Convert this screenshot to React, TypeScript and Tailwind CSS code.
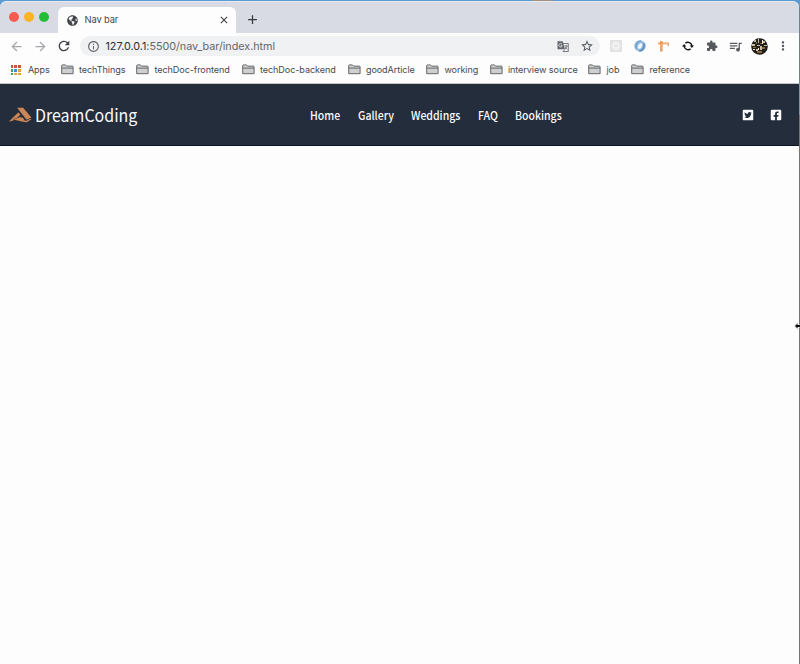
import React from "react";
import { FaAccusoft, FaFacebookSquare, FaTwitterSquare, FaGlobeAmericas } from "react-icons/fa";
import {
  MdAdd,
  MdArrowBack,
  MdArrowForward,
  MdClose,
  MdExtension,
  MdInfoOutline,
  MdMoreVert,
  MdQueueMusic,
  MdRefresh,
  MdStarBorder,
} from "react-icons/md";

const bookmarks = [
  { label: "techThings", cell: "w-[75.5px]", text: "w-[46px]" },
  { label: "techDoc-frontend", cell: "w-[105.5px]", text: "w-[75px]" },
  { label: "techDoc-backend", cell: "w-[106px]", text: "w-[75px]" },
  { label: "goodArticle", cell: "w-[78.5px]", text: "w-[48px]" },
  { label: "working", cell: "w-[63.5px]", text: "w-[33px]" },
  { label: "interview source", cell: "w-[98.5px]", text: "w-[69px]" },
  { label: "job", cell: "w-[43px]", text: "w-[13px]" },
  { label: "reference", cell: "w-[60px]", text: "w-[41px]" },
];

const menu = [
  { label: "Home", cell: "w-[47.7px]" },
  { label: "Gallery", cell: "w-[53px]" },
  { label: "Weddings", cell: "w-[67px]" },
  { label: "FAQ", cell: "w-[37.5px]" },
  { label: "Bookings", cell: "w-[48px]" },
];

const appColors = [
  "bg-[#d4513f]", "bg-[#d4513f]", "bg-[#c9573f]",
  "bg-[#3f9f62]", "bg-[#4387d9]", "bg-[#e0a03a]",
  "bg-[#3f9f62]", "bg-[#d9a441]", "bg-[#e0a03a]",
];

function Folder() {
  return (
    <svg className="h-[11px] w-[13px] shrink-0" viewBox="0 0 13 11">
      <path d="M.7 9.7V1.6Q.7.9 1.4.9h3l1.2 1.2h5.7q.8 0 .8.8v6.8Z" fill="#cfcfcf" stroke="#66686b" />
      <path d="M.8 4.1h11.3" stroke="#66686b" fill="none" />
    </svg>
  );
}

function Translate() {
  return (
    <svg className="h-[11px] w-[12px]" viewBox="0 0 12 11">
      <path d="M4.5 2.5h6.8v8H6" fill="#f0f1f3" stroke="#6a6d71" strokeWidth=".9" />
      <path d="M.5.3h5.2l2.2 8H.5Z" fill="#63666b" />
      <path d="M5 3.4A1.7 1.7 0 1 0 5.2 4.8H3.6" fill="none" stroke="#f0f1f3" strokeWidth=".8" />
      <path d="M7.3 5h3.5M9 4v1M10 5q-.5 2-2.2 3M8 6.2l2.3 2.2M6 10.5l1.8-2" fill="none" stroke="#606469" strokeWidth=".8" />
    </svg>
  );
}

function Atom() {
  return (
    <svg className="size-3" viewBox="0 0 12 12">
      <rect width="12" height="12" rx="1" fill="#e1e1e2" />
      <g fill="none" stroke="#f8f8f8" strokeWidth=".8">
        <ellipse cx="6" cy="6" rx="4.8" ry="1.9" />
        <ellipse cx="6" cy="6" rx="4.8" ry="1.9" transform="rotate(60 6 6)" />
        <ellipse cx="6" cy="6" rx="4.8" ry="1.9" transform="rotate(120 6 6)" />
      </g>
    </svg>
  );
}

function BlueSwirl() {
  return (
    <svg className="size-3" viewBox="0 0 12 12">
      <circle cx="6" cy="6" r="5.8" fill="#9abddd" />
      <path d="M7 .9C3 1.2 1.5 4.5 2.2 8.7" fill="none" stroke="#6b9fce" strokeWidth="1.3" />
      <path d="M5.2 11.1C9.5 10.4 10.8 7 9.8 3.3" fill="none" stroke="#5088bf" strokeWidth="1.4" />
      <ellipse cx="6" cy="6" rx="1.7" ry="3" fill="#f4f8fb" transform="rotate(32 6 6)" />
    </svg>
  );
}

function Crane() {
  return (
    <svg className="h-3 w-3" viewBox="0 0 12 12">
      <path d="M0 2.4h10.8v2H0Z" fill="#e8a875" />
      <path d="M2 1h2.6v10.5H2Z" fill="#e39b62" />
      <path d="m2.3 10 1.8-2-1.8-2 1.8-2M5.5 4l1.2-1.3L8 4l1.2-1.3" fill="none" stroke="#f7d2ae" strokeWidth=".5" />
      <path d="M10.3 4v2" stroke="#d78b58" />
    </svg>
  );
}

function Sync() {
  return (
    <svg className="size-3" viewBox="0 0 12 12" fill="#151515">
      <path d="M3.4 3.1A4 4 0 0 1 9.9 6M8.6 8.9A4 4 0 0 1 2.1 6" fill="none" stroke="#151515" strokeWidth="1.5" />
      <path d="M7.7 5.5H12L9.9 8ZM0 6.5h4.3L2.1 4Z" />
    </svg>
  );
}

function Avatar() {
  return (
    <svg className="size-[17px]" viewBox="0 0 17 17">
      <defs>
        <clipPath id="avatar"><circle cx="8.5" cy="8.5" r="8.3" /></clipPath>
      </defs>
      <g clipPath="url(#avatar)">
        <path fill="#211f1b" d="M0 0h17v17H0z" />
        <path fill="#cdbd9f" d="M3 2h2v2H3zm4-1h1v4H7zm5 2h2v2h-2zM1 6h3v2H1zm5 1h3v1H6zm7 0h3v1h-3zM9 8h2v4H9zm-4 3h2v2H5z" />
        <path fill="#8c6a44" d="M5 4h1v2H5zm4 1h2v1H9zm2 4h3v2h-3zM2 9h3v1H2zm4 4h5v2H6z" />
        <path fill="#f3ead8" d="M11 2h1v4h-1zM2 11h2v1H2zm5-1h1v2H7z" />
      </g>
    </svg>
  );
}

export default function App() {
  return (
    <div className="relative h-[664px] w-[800px] overflow-hidden bg-[#fefdfe] font-['Inter',sans-serif] text-[#46484c]">
      <header>
        <div className="flex h-[33px] flex-col bg-[#5b9ad3]">
          <div className="ml-[532px] h-px w-[21px] bg-[#a8917d]" />
          <div className="flex h-[32px] w-[799px] rounded-t-[6px] border-t border-[#e6eaf1] bg-[#d8dbe3] pl-[9px]">
            <div className="flex w-[49px] gap-[5px] pt-[10px]">
              <i className="size-[10px] rounded-full bg-[#fb5a50]" />
              <i className="size-[10px] rounded-full bg-[#fcb427]" />
              <i className="size-[10px] rounded-full bg-[#24bd38]" />
            </div>
            <div className="mt-[5px] flex h-[26px] w-[178px] items-center rounded-t-[6px] bg-[#fefdfe] pl-[9px] pr-[6px]">
              <FaGlobeAmericas className="size-[11px] text-[#414449]" />
              <span className="ml-[6.5px] w-[34px] whitespace-nowrap text-[9.4px] leading-none tracking-[-0.15px]">Nav bar</span>
              <MdClose className="ml-auto size-[12px] text-[#393c40]" />
            </div>
            <MdAdd className="ml-[9px] mt-[10px] size-[15px] text-[#36393d]" />
          </div>
        </div>
        <div className="flex h-[26px] items-center pl-[9px]">
          <MdArrowBack className="size-[15px] text-[#a5a7aa]" />
          <MdArrowForward className="ml-[9px] size-[15px] text-[#a5a7aa]" />
          <MdRefresh className="ml-[8px] size-[16px] text-[#404347]" />
          <div className="ml-[8px] flex h-[20px] w-[520px] items-center rounded-full bg-[#eff1f3] pl-[7px] pr-[6px]">
            <MdInfoOutline className="size-[13px] text-[#606367]" />
            <span className="ml-[5.5px] whitespace-nowrap pt-px text-[10.8px] leading-[12px] tracking-[-0.03px] text-[#66686c]">
              <span className="text-[#2e3034]">127.0.0.1</span>:5500/nav_bar/index.html
            </span>
            <span className="ml-auto"><Translate /></span>
            <MdStarBorder className="ml-[11px] size-[14px] text-[#505358]" />
          </div>
          <div className="ml-[10px] flex items-center gap-[12px]">
            <Atom /><BlueSwirl /><Crane /><Sync />
            <MdExtension className="-ml-[0.5px] size-[12px] text-[#56595d]" />
            <MdQueueMusic className="-ml-[1.5px] size-[15px] text-[#56595d]" />
          </div>
          <div className="ml-[8px]"><Avatar /></div>
          <MdMoreVert className="ml-[8px] size-[14px] text-[#505358]" />
        </div>
        <div className="flex h-[25px] items-start border-b border-[#c3c4c8] pl-[10.5px] pt-[5px] text-[9.05px] leading-[11px] tracking-[-0.06px]">
          <div className="mt-[1px] grid grid-cols-3 gap-[1px]">
            {appColors.map((color, i) => <i key={i} className={"size-[2.8px] " + color} />)}
          </div>
          <span className="ml-[7px] w-[33px] shrink-0">Apps</span>
          {bookmarks.map((bookmark) => (
            <div key={bookmark.label} className={"flex shrink-0 " + bookmark.cell}>
              <Folder />
              <span className={"ml-[5px] flex whitespace-nowrap " + bookmark.text}>{bookmark.label}</span>
            </div>
          ))}
        </div>
      </header>
      <nav className="flex h-[62px] w-[799px] items-center border-b border-[#0d1525] bg-[#242d3b] pl-[9px] font-['Noto_Sans_CJK_SC',sans-serif] text-[#fbfbfc]">
        <div className="flex w-[301px] items-center">
          <FaAccusoft className="h-[18px] w-[22.5px] text-[#cc8656]" />
          <span className="ml-[3px] inline-block origin-left scale-x-[0.925] whitespace-nowrap text-[17.3px] leading-[26px]">DreamCoding</span>
        </div>
        <div className="flex w-[432px] pt-px text-[11.5px] font-medium leading-[18px]">
          {menu.map((item) => (
            <a key={item.label} className={"shrink-0 whitespace-nowrap " + item.cell}>
              <span className="inline-block origin-left scale-x-[0.915]">{item.label}</span>
            </a>
          ))}
        </div>
        <div className="flex gap-[16px] pt-px">
          <FaTwitterSquare className="size-[12px]" />
          <FaFacebookSquare className="size-[12px]" />
        </div>
      </nav>
      <div className="absolute right-0 top-[7px] h-[76px] w-px bg-[#68819d]" />
      <div className="absolute right-0 top-[83px] h-[32px] w-px bg-[#8295a2]" />
      <div className="absolute bottom-0 right-0 top-[115px] w-px bg-[#77736f]" />
      <svg className="absolute right-0 top-[322px] h-2 w-[6px]" viewBox="0 0 6 8">
        <path d="m0 4 4-4v2.5h2v3H4V8Z" fill="#dedede" />
        <path d="m1 4 2.5-2.5V3H6v2H3.5v1.5Z" fill="#111" />
      </svg>
    </div>
  );
}
